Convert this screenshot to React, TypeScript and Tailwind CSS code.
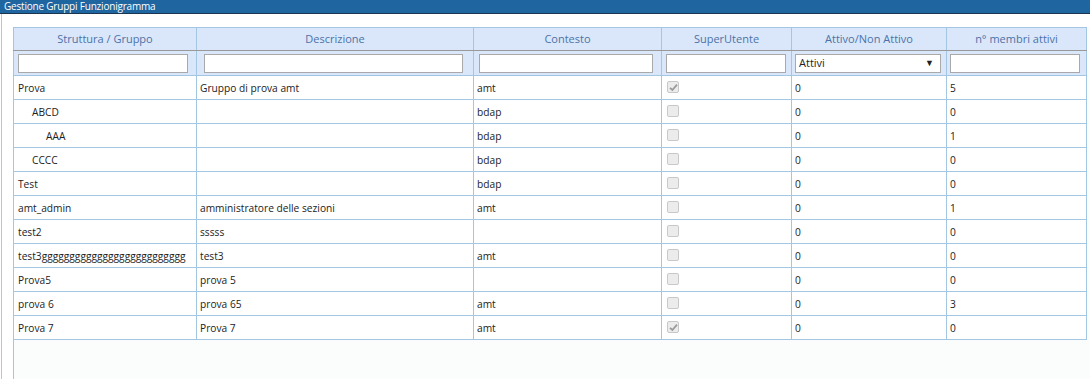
import React from 'react';

type Row = {
  name: string;
  level: number;
  desc: string;
  ctx: string;
  superUser: boolean;
  active: string;
  members: string;
};

const rows: Row[] = [
  { name: 'Prova', level: 0, desc: 'Gruppo di prova amt', ctx: 'amt', superUser: true, active: '0', members: '5' },
  { name: 'ABCD', level: 1, desc: '', ctx: 'bdap', superUser: false, active: '0', members: '0' },
  { name: 'AAA', level: 2, desc: '', ctx: 'bdap', superUser: false, active: '0', members: '1' },
  { name: 'CCCC', level: 1, desc: '', ctx: 'bdap', superUser: false, active: '0', members: '0' },
  { name: 'Test', level: 0, desc: '', ctx: 'bdap', superUser: false, active: '0', members: '0' },
  { name: 'amt_admin', level: 0, desc: 'amministratore delle sezioni', ctx: 'amt', superUser: false, active: '0', members: '1' },
  { name: 'test2', level: 0, desc: 'sssss', ctx: '', superUser: false, active: '0', members: '0' },
  { name: 'test3gggggggggggggggggggggggggg', level: 0, desc: 'test3', ctx: 'amt', superUser: false, active: '0', members: '0' },
  { name: 'Prova5', level: 0, desc: 'prova 5', ctx: '', superUser: false, active: '0', members: '0' },
  { name: 'prova 6', level: 0, desc: 'prova 65', ctx: 'amt', superUser: false, active: '0', members: '3' },
  { name: 'Prova 7', level: 0, desc: 'Prova 7', ctx: 'amt', superUser: true, active: '0', members: '0' },
];

const headers = ['Struttura / Gruppo', 'Descrizione', 'Contesto', 'SuperUtente', 'Attivo/Non Attivo', 'n° membri attivi'];
const widths = [183, 277, 188, 130, 155, 140];
const indent = ['pl-[4px]', 'pl-[18px]', 'pl-[32px]'];
const filterPad = ['pl-[4px] pr-[8px]', 'pl-[7px] pr-[10px]', 'pl-[5px] pr-[8px]', 'pl-[4px] pr-[5px]', 'pl-[3px] pr-[5px]', 'pl-[3px] pr-[6px]'];

function Check({ checked }: { checked: boolean }) {
  return (
    <div className="w-[12px] h-[12px] rounded-[2px] border border-[#c8c8c8] bg-[#ececec] flex items-center justify-center">
      {checked && (
        <svg width="9" height="9" viewBox="0 0 9 9">
          <path d="M1 4.8 L3.4 7 L8 1.6" stroke="#9a9a9a" strokeWidth="1.8" fill="none" />
        </svg>
      )}
    </div>
  );
}

export default function App() {
  return (
    <div className="w-[1090px] h-[379px] flex flex-col bg-white overflow-hidden text-[10.2px] text-[#222]" style={{ fontFamily: '"Open Sans", "Noto Sans", sans-serif' }}>
      <div className="h-[14px] bg-[#1f65a0] border-b border-[#1b3550] text-white text-[10px] leading-[13px] pl-[4px] tracking-[-0.2px]">
        Gestione Gruppi Funzionigramma
      </div>
      <div className="flex-1 flex border-l border-[#c4c4c4] ml-[1px] pt-[13px] pl-[11px]">
        <div className="flex-1 border-l border-[#a3c7e3] bg-[#fbfcfc]">
          <table className="table-fixed border-collapse w-[1074px] -ml-[1px]">
            <colgroup>
              {widths.map((w, i) => (
                <col key={i} style={{ width: w }} />
              ))}
            </colgroup>
            <thead>
              <tr className="h-[23px] bg-[#dae7fb]">
                {headers.map((h) => (
                  <th key={h} className="border border-[#a3c7e3] border-b-[#999] font-normal text-[11px] text-[#4c72a6] text-center align-middle leading-[14px]">
                    {h}
                  </th>
                ))}
              </tr>
              <tr className="h-[25px] bg-[#dae7fb]">
                {headers.map((h, i) => (
                  <th key={h} className={`border border-[#a3c7e3] border-t-[#999] ${filterPad[i]} font-normal align-middle`}>
                    {i === 4 ? (
                      <div className="h-[19px] bg-white border border-[#a9a9a9] flex items-center justify-between pl-[3px] pr-[6px] text-[#222] text-[11px]">
                        <span>Attivi</span>
                        <span className="text-[9px]">▼</span>
                      </div>
                    ) : (
                      <div className="h-[19px] bg-white border border-[#a9a9a9]" />
                    )}
                  </th>
                ))}
              </tr>
            </thead>
            <tbody>
              {rows.map((r, idx) => (
                <tr key={idx} className="h-[24px] bg-white">
                  <td className={`border border-[#a3c7e3] ${indent[r.level]} whitespace-nowrap overflow-hidden leading-[14px]`}>{r.name}</td>
                  <td className="border border-[#a3c7e3] pl-[3px] whitespace-nowrap overflow-hidden leading-[14px]">{r.desc}</td>
                  <td className="border border-[#a3c7e3] pl-[3px] leading-[14px]">{r.ctx}</td>
                  <td className="border border-[#a3c7e3] pl-[5px] align-top pt-[5px]">
                    <Check checked={r.superUser} />
                  </td>
                  <td className="border border-[#a3c7e3] pl-[3px] leading-[14px]">{r.active}</td>
                  <td className="border border-[#a3c7e3] pl-[3px] leading-[14px]">{r.members}</td>
                </tr>
              ))}
            </tbody>
          </table>
        </div>
      </div>
    </div>
  );
}
